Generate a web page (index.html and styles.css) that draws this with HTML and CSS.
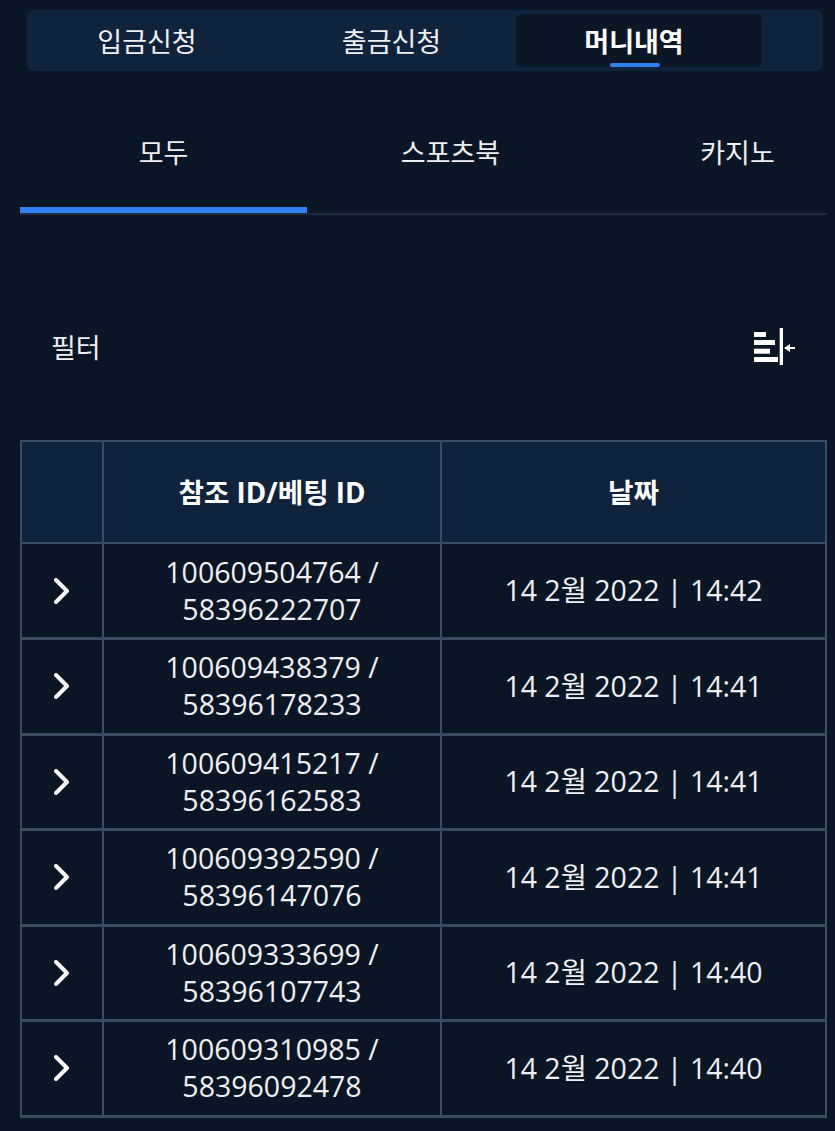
FILE: index.html
```html
<!DOCTYPE html>
<html lang="ko">
<head>
    <meta charset="UTF-8">
    <meta name="viewport" content="width=device-width, initial-scale=1.0">
    <title>머니내역</title>
    <link rel="stylesheet" href="styles.css">
</head>
<body>
    <nav class="money-tabs">
        <a class="money-tab first">입금신청</a>
        <a class="money-tab second">출금신청</a>
        <a class="money-tab active">머니내역</a>
    </nav>

    <div class="sub-tabs">
        <a class="sub-tab active">모두</a>
        <a class="sub-tab">스포츠북</a>
        <a class="sub-tab">카지노</a>
    </div>

    <div class="filter-row">
        <span>필터</span>
        <svg class="filter-icon" width="41" height="37" viewBox="0 0 41 37" fill="#fff">
            <rect x="0" y="4" width="12" height="5"/>
            <rect x="0" y="12" width="21" height="5"/>
            <rect x="0" y="20.7" width="16" height="5"/>
            <rect x="0" y="29" width="24" height="5"/>
            <rect x="25.7" y="0" width="3.3" height="37"/>
            <rect x="35" y="19" width="6" height="2"/>
            <path d="M30 20l6-4v8z"/>
        </svg>
    </div>

    <table class="history">
        <colgroup>
            <col class="col-arrow">
            <col class="col-id">
            <col class="col-date">
        </colgroup>
        <thead>
            <tr>
                <th></th>
                <th>참조 ID/베팅 ID</th>
                <th>날짜</th>
            </tr>
        </thead>
        <tbody>
            <tr>
                <td><svg class="chevron" width="16" height="26" viewBox="0 0 16 26"><path d="M2 2l11 11L2 24"/></svg></td>
                <td>100609504764 /<br>58396222707</td>
                <td>14 2월 2022 | 14:42</td>
            </tr>
            <tr>
                <td><svg class="chevron" width="16" height="26" viewBox="0 0 16 26"><path d="M2 2l11 11L2 24"/></svg></td>
                <td>100609438379 /<br>58396178233</td>
                <td>14 2월 2022 | 14:41</td>
            </tr>
            <tr>
                <td><svg class="chevron" width="16" height="26" viewBox="0 0 16 26"><path d="M2 2l11 11L2 24"/></svg></td>
                <td>100609415217 /<br>58396162583</td>
                <td>14 2월 2022 | 14:41</td>
            </tr>
            <tr>
                <td><svg class="chevron" width="16" height="26" viewBox="0 0 16 26"><path d="M2 2l11 11L2 24"/></svg></td>
                <td>100609392590 /<br>58396147076</td>
                <td>14 2월 2022 | 14:41</td>
            </tr>
            <tr>
                <td><svg class="chevron" width="16" height="26" viewBox="0 0 16 26"><path d="M2 2l11 11L2 24"/></svg></td>
                <td>100609333699 /<br>58396107743</td>
                <td>14 2월 2022 | 14:40</td>
            </tr>
            <tr>
                <td><svg class="chevron" width="16" height="26" viewBox="0 0 16 26"><path d="M2 2l11 11L2 24"/></svg></td>
                <td>100609310985 /<br>58396092478</td>
                <td>14 2월 2022 | 14:40</td>
            </tr>
        </tbody>
    </table>
</body>
</html>
```
FILE: styles.css
```css
html, body {
    height: 100%;
    overflow: hidden;
}
body {
    margin: 0;
    padding-top: 10px;
    box-sizing: border-box;
    background-color: #0a1626;
    color: #eef0f3;
    font-family: "Open Sans", "Noto Sans CJK KR", sans-serif;
}

/* top tabs */
.money-tabs {
    display: flex;
    width: 796px;
    height: 61px;
    margin-left: 27px;
    padding: 4px 0;
    box-sizing: border-box;
    background-color: #10233d;
    border-radius: 7px;
}
.money-tab {
    display: flex;
    align-items: center;
    justify-content: center;
    font-size: 27px;
    box-sizing: border-box;
}
.money-tab.first {
    width: 240px;
}
.money-tab.second {
    width: 249px;
}
.money-tab.active {
    position: relative;
    width: 246px;
    padding-right: 10px;
    background-color: #0b1727;
    border-radius: 6px;
    font-weight: 700;
    color: #fff;
}
.money-tab.active::after {
    content: "";
    position: absolute;
    left: 94px;
    bottom: 0;
    width: 50px;
    height: 4px;
    background-color: #2f80f0;
    border-radius: 2px;
}

/* sub tabs */
.sub-tabs {
    display: flex;
    width: 807px;
    height: 144px;
    margin-left: 20px;
    overflow: hidden;
    box-sizing: border-box;
    border-bottom: 2px solid #1f2c3e;
}
.sub-tab {
    flex: 0 0 287px;
    height: 142px;
    padding-top: 62px;
    box-sizing: border-box;
    text-align: center;
    font-size: 27px;
    line-height: 40px;
}
.sub-tab.active {
    border-bottom: 6px solid #2f80f0;
}

/* filter */
.filter-row {
    display: flex;
    align-items: center;
    justify-content: space-between;
    height: 225px;
    padding: 38px 40px 0 51px;
    font-size: 27px;
    box-sizing: border-box;
}

/* table */
.history {
    width: 807px;
    margin-left: 20px;
    border-collapse: collapse;
    table-layout: fixed;
}
.col-arrow {
    width: 82px;
}
.col-id {
    width: 338px;
}
.history th, .history td {
    border: 2px solid #3b4c63;
    text-align: center;
    padding: 0;
}
.history th {
    height: 97px;
    padding-bottom: 3px;
    background-color: #10233d;
    font-size: 27.7px;
    font-weight: 700;
    color: #fff;
}
.history td {
    height: 92.5px;
    border-bottom-width: 3px;
    border-top-width: 3px;
    font-size: 28.5px;
    line-height: 37px;
}
.history tbody tr:first-child td {
    height: 93px;
    border-top-width: 2px;
}
.chevron {
    display: block;
    margin-left: 32px;
    fill: none;
    stroke: #fff;
    stroke-width: 4;
    stroke-linecap: round;
    stroke-linejoin: round;
}
```
